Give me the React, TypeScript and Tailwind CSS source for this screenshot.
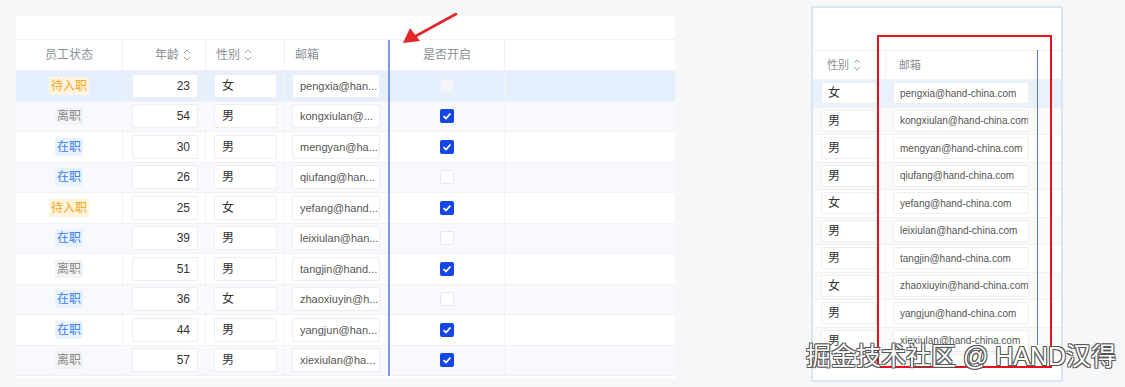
import React from 'react';

type Row = { status: string; age: number; sex: string; email: string; short: string; on: boolean };

const rows: Row[] = [
  { status: '待入职', age: 23, sex: '女', email: 'pengxia', short: 'pengxia@han...', on: false },
  { status: '离职', age: 54, sex: '男', email: 'kongxiulan', short: 'kongxiulan@...', on: true },
  { status: '在职', age: 30, sex: '男', email: 'mengyan', short: 'mengyan@ha...', on: true },
  { status: '在职', age: 26, sex: '男', email: 'qiufang', short: 'qiufang@han...', on: false },
  { status: '待入职', age: 25, sex: '女', email: 'yefang', short: 'yefang@hand...', on: true },
  { status: '在职', age: 39, sex: '男', email: 'leixiulan', short: 'leixiulan@han...', on: false },
  { status: '离职', age: 51, sex: '男', email: 'tangjin', short: 'tangjin@hand...', on: true },
  { status: '在职', age: 36, sex: '女', email: 'zhaoxiuyin', short: 'zhaoxiuyin@h...', on: false },
  { status: '在职', age: 44, sex: '男', email: 'yangjun', short: 'yangjun@han...', on: true },
  { status: '离职', age: 57, sex: '男', email: 'xiexiulan', short: 'xiexiulan@ha...', on: true },
];

const tagClass: Record<string, string> = {
  待入职: 'bg-[#fff4dc] text-[#f5a623]',
  离职: 'bg-[#f2f3f5] text-[#8a8a8a]',
  在职: 'bg-[#e9f2ff] text-[#3a7ff2]',
};

const SortIcon = () => (
  <svg width="8" height="12" viewBox="0 0 8 12" fill="none" stroke="#9aa0a8" strokeWidth="1">
    <path d="M1 4 L4 1 L7 4" />
    <path d="M1 8 L4 11 L7 8" />
  </svg>
);

const Checkbox = ({ on, faded }: { on: boolean; faded?: boolean }) =>
  on ? (
    <div className="w-[14px] h-[14px] rounded-[2px] bg-[#1446e8] flex items-center justify-center">
      <svg width="10" height="10" viewBox="0 0 10 10" fill="none" stroke="white" strokeWidth="1.8">
        <path d="M1.5 5.2 L4 7.5 L8.5 2.5" />
      </svg>
    </div>
  ) : (
    <div
      className={`w-[14px] h-[14px] rounded-[2px] border ${
        faded ? 'bg-[#f3f5f8] border-[#eef0f3]' : 'bg-white border-[#e6e8ec]'
      }`}
    />
  );

const LeftTable = () => (
  <div className="w-[659px] mt-[16px] ml-[16px] bg-white flex flex-col pb-[2px]">
    <div className="h-[24px] border-b border-[#eef0f3]" />
    {/* header */}
    <div className="flex h-[31px] text-[12px] text-[#8c9096] border-b border-[#eef0f3]">
      <div className="w-[107px] flex items-center justify-center border-r border-[#f0f1f3]">员工状态</div>
      <div className="w-[83px] flex items-center justify-end gap-1 pr-[14px] border-r border-[#f0f1f3]">
        年龄 <SortIcon />
      </div>
      <div className="w-[79px] flex items-center gap-1 pl-[10px] border-r border-[#f0f1f3]">
        性别 <SortIcon />
      </div>
      <div className="w-[105px] flex items-center pl-[10px] border-r border-[#f0f1f3]">邮箱</div>
      <div className="w-[115px] flex items-center justify-center border-r border-[#f0f1f3]">是否开启</div>
      <div className="flex-1" />
    </div>
    {rows.map((r, i) => (
      <div
        key={i}
        className={`flex h-[30.5px] text-[12px] text-[#333] border-b border-[#f0f2f5] ${
          i === 0 ? 'bg-[#e6effd]' : i % 2 === 1 ? 'bg-[#f8f9fc]' : 'bg-white'
        }`}
      >
        <div className="w-[107px] flex items-center justify-center border-r border-[#f3f4f6]">
          <span className={`px-[2px] h-[18px] leading-[18px] rounded-[2px] ${tagClass[r.status]}`}>{r.status}</span>
        </div>
        <div className="w-[83px] flex items-center pl-[9px] border-r border-[#f3f4f6]">
          <div className="w-[66px] h-[24px] bg-white border border-[#eceef1] rounded-[2px] flex items-center justify-end pr-[7px]">
            {r.age}
          </div>
        </div>
        <div className="w-[79px] flex items-center pl-[8px] border-r border-[#f3f4f6]">
          <div className="w-[63px] h-[24px] bg-white border border-[#eceef1] rounded-[2px] flex items-center pl-[7px]">
            {r.sex}
          </div>
        </div>
        <div className="w-[105px] flex items-center pl-[7px]">
          <div className="w-[88px] h-[24px] bg-white border border-[#eceef1] rounded-[2px] flex items-center pl-[7px] text-[11px] text-[#555] whitespace-nowrap overflow-hidden">
            {r.short}
          </div>
        </div>
        <div className="w-[115px] flex items-center justify-center border-r border-[#f3f4f6]">
          <Checkbox on={r.on} faded={i === 0} />
        </div>
        <div className="flex-1" />
      </div>
    ))}
  </div>
);

const RightTable = () => (
  <div className="w-[252px] mt-[6px] ml-[136px] h-[376px] border-2 border-[#dbe4f4] bg-white flex flex-col overflow-hidden">
    <div className="h-[42px]" />
    <div className="flex h-[30px] text-[11px] text-[#8c9096] border-b border-[#eef0f3] border-t">
      <div className="w-[73px] flex items-center gap-1 pl-[14px] border-r border-[#f0f1f3]">
        性别 <SortIcon />
      </div>
      <div className="flex-1 flex items-center pl-[13px]">邮箱</div>
    </div>
    {rows.map((r, i) => (
      <div
        key={i}
        className={`flex h-[27.5px] shrink-0 text-[12px] text-[#333] border-b border-[#f0f2f5] ${
          i === 0 ? 'bg-[#e9f1fd]' : i % 2 === 1 ? 'bg-[#f9fafc]' : 'bg-white'
        }`}
      >
        <div className="w-[73px] flex items-center pl-[8px] border-r border-[#f3f4f6]">
          <div className="w-[56px] h-[22px] bg-white border border-[#eceef1] rounded-[2px] flex items-center pl-[6px]">
            {r.sex}
          </div>
        </div>
        <div className="flex-1 flex items-center pl-[7px]">
          <div className="w-[136px] h-[22px] bg-white border border-[#eceef1] rounded-[2px] flex items-center pl-[6px] text-[10px] text-[#555] whitespace-nowrap overflow-hidden">
            {r.email}@hand-china.com
          </div>
        </div>
      </div>
    ))}
  </div>
);

export default function App() {
  return (
    <div className="relative w-[1125px] h-[387px] overflow-hidden bg-[#f6f7f9] font-['Liberation_Sans','Noto_Sans_CJK_SC',sans-serif]">
      <div className="flex items-start">
        <LeftTable />
        <RightTable />
      </div>

      {/* column resize indicators */}
      <div className="absolute left-[388px] top-[40px] w-[2px] h-[336px] bg-[#7e97e2]" />
      <div className="absolute left-[1037px] top-[50px] w-[1px] h-[295px] bg-[#5a7cd6]" />

      {/* red arrow */}
      <svg className="absolute left-[398px] top-[10px]" width="64" height="38" viewBox="0 0 64 38">
        <path d="M58 4 L16 27" stroke="#e5262b" strokeWidth="2.6" strokeLinecap="round" />
        <path d="M5 33 L12 18 L22 31 Z" fill="#e5262b" />
      </svg>

      {/* red highlight box */}
      <div className="absolute left-[877px] top-[35px] w-[175px] h-[333px] border-2 border-[#e8101a]" />

      {/* watermark */}
      <div className="absolute left-[806px] top-[338px] text-[25px] leading-[36px] text-white whitespace-nowrap [text-shadow:1px_1px_0_#555,-1px_-1px_0_#555,1px_-1px_0_#555,-1px_1px_0_#555]">
        掘金技术社区 @ HAND汉得
      </div>
    </div>
  );
}
